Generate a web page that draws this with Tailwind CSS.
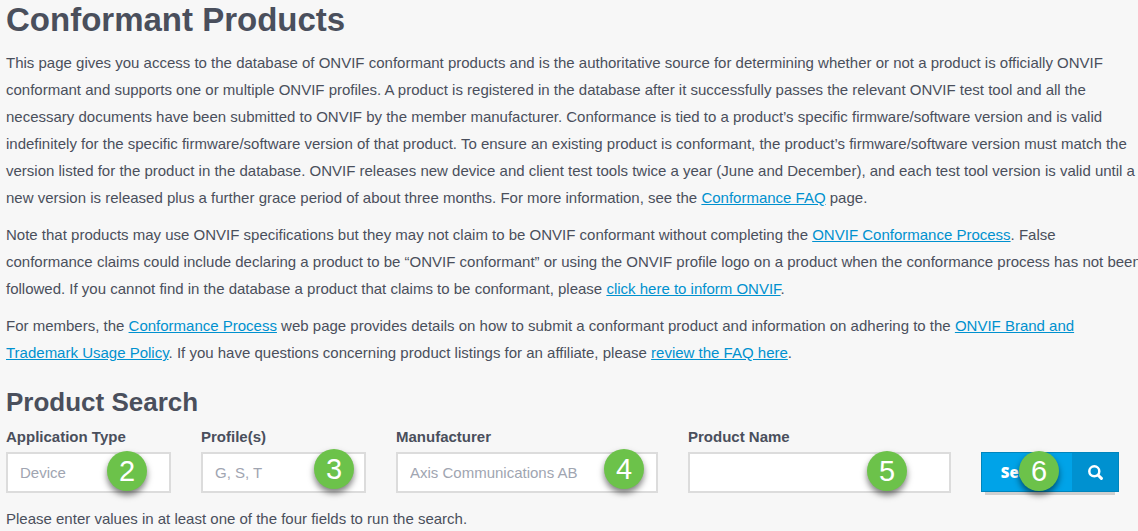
<!DOCTYPE html>
<html lang="en">
<head>
  <meta charset="UTF-8">
  <meta name="viewport" content="width=device-width, initial-scale=1.0">
  <title>Conformant Products</title>
  <script src="https://cdn.jsdelivr.net/npm/@tailwindcss/browser@4"></script>
</head>
<body class="bg-[#f7f7f7] text-[#4a4f5c] font-['Liberation_Sans',Arial,sans-serif] text-[15px] leading-[27px] overflow-x-hidden">
  <main class="pl-1.5">
    <h1 class="text-[33px] leading-10 font-bold mb-[9px]">Conformant Products</h1>

    <div class="space-y-2.5 -mr-2">
      <p>This page gives you access to the database of ONVIF conformant products and is the authoritative source for determining whether or not a product is officially ONVIF conformant and supports one or multiple ONVIF profiles. A product is registered in the database after it successfully passes the relevant ONVIF test tool and all the necessary documents have been submitted to ONVIF by the member manufacturer. Conformance is tied to a product’s specific firmware/software version and is valid indefinitely for the specific firmware/software version of that product. To ensure an existing product is conformant, the product’s firmware/software version must match the version listed for the product in the database. ONVIF releases new device and client test tools twice a year (June and December), and each test tool version is valid until a new version is released plus a further grace period of about three months. For more information, see the <a href="#" class="text-[#0091cf] underline">Conformance FAQ</a> page.</p>
      <p>Note that products may use ONVIF specifications but they may not claim to be ONVIF conformant without completing the <a href="#" class="text-[#0091cf] underline">ONVIF Conformance Process</a>. False conformance claims could include declaring a product to be “ONVIF conformant” or using the ONVIF profile logo on a product when the conformance process has not been followed. If you cannot find in the database a product that claims to be conformant, please <a href="#" class="text-[#0091cf] underline">click here to inform ONVIF</a>.</p>
      <p>For members, the <a href="#" class="text-[#0091cf] underline">Conformance Process</a> web page provides details on how to submit a conformant product and information on adhering to the <a href="#" class="text-[#0091cf] underline">ONVIF Brand and Trademark Usage Policy</a>. If you have questions concerning product listings for an affiliate, please <a href="#" class="text-[#0091cf] underline">review the FAQ here</a>.</p>
    </div>

    <h2 class="text-[26px] leading-8 font-bold mt-5 mb-[5px]">Product Search</h2>

    <form class="grid grid-cols-[165fr_165fr_262fr_263fr_138px] items-end gap-x-[30px] mr-[19px]">
      <div class="relative">
        <label for="type" class="block font-bold">Application Type</label>
        <input id="type" type="text" placeholder="Device" class="block w-full h-[41px] mt-0.5 px-3 bg-white border-2 border-[#dcdcdc] placeholder:text-[#a0a5b1]">
        <span class="absolute right-6 bottom-0.5 size-10 rounded-full bg-[#6cc24a] text-white text-[29px] leading-10 text-center shadow-[0_4px_6px_rgba(0,0,0,0.5)]">2</span>
      </div>
      <div class="relative">
        <label for="profiles" class="block font-bold">Profile(s)</label>
        <input id="profiles" type="text" placeholder="G, S, T" class="block w-full h-[41px] mt-0.5 px-3 bg-white border-2 border-[#dcdcdc] placeholder:text-[#a0a5b1]">
        <span class="absolute right-3 bottom-1 size-10 rounded-full bg-[#6cc24a] text-white text-[29px] leading-10 text-center shadow-[0_4px_6px_rgba(0,0,0,0.5)]">3</span>
      </div>
      <div class="relative">
        <label for="manufacturer" class="block font-bold">Manufacturer</label>
        <input id="manufacturer" type="text" placeholder="Axis Communications AB" class="block w-full h-[41px] mt-0.5 px-3 bg-white border-2 border-[#dcdcdc] placeholder:text-[#a0a5b1]">
        <span class="absolute right-3.5 bottom-1 size-10 rounded-full bg-[#6cc24a] text-white text-[29px] leading-10 text-center shadow-[0_4px_6px_rgba(0,0,0,0.5)]">4</span>
      </div>
      <div class="relative">
        <label for="name" class="block font-bold">Product Name</label>
        <input id="name" type="text" class="block w-full h-[41px] mt-0.5 px-3 bg-white border-2 border-[#dcdcdc]">
        <span class="absolute right-11 bottom-0.5 size-10 rounded-full bg-[#6cc24a] text-white text-[29px] leading-10 text-center shadow-[0_4px_6px_rgba(0,0,0,0.5)]">5</span>
      </div>
      <div class="relative">
        <button type="button" class="flex w-full h-10 mb-px border border-[#0085bd] bg-[#00a3e8] text-white font-extrabold font-['Open_Sans',sans-serif] shadow-[0_7px_0_-4px_#d0d0d0]">
          <span class="flex-1 self-center text-center">Search</span>
          <span class="flex w-[46px] self-stretch items-center justify-center bg-[#0091d0]">
            <svg class="size-[15px]" viewBox="0 0 15 15" fill="none" stroke="currentColor" stroke-width="2.5" stroke-linecap="round">
              <circle cx="6.3" cy="6.3" r="5"/>
              <path d="M10.2 10.2l3.2 3.2" stroke-width="3"/>
            </svg>
          </span>
        </button>
        <span class="absolute left-[38px] bottom-0.5 size-10 rounded-full bg-[#6cc24a] text-white text-[29px] leading-10 text-center shadow-[0_4px_6px_rgba(0,0,0,0.5)]">6</span>
      </div>
    </form>

    <p class="mt-3">Please enter values in at least one of the four fields to run the search.</p>
  </main>
</body>
</html>
